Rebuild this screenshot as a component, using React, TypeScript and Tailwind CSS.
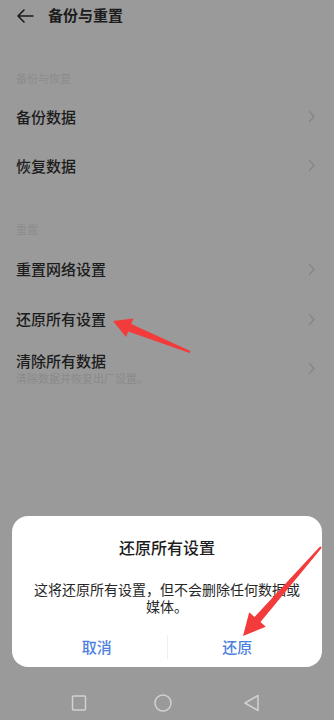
const FONT = "font-['Noto_Sans_CJK_SC','Noto_Sans',sans-serif]"

function Chevron() {
  return (
    <svg width="8" height="13" viewBox="0 0 8 13" fill="none">
      <path d="M1.5 1.5 L6 6.5 L1.5 11.5" stroke="#858585" strokeWidth="1.3" strokeLinecap="round" strokeLinejoin="round" />
    </svg>
  )
}

function Row({ title, subtitle, tall }: { title: string; subtitle?: string; tall?: boolean }) {
  return (
    <div className={`flex items-center justify-between pl-4 pr-[18px] ${tall ? 'h-[50px]' : 'h-[49px]'}`}>
      <div className="flex flex-col">
        <span className="text-[15px] font-medium leading-[20px] text-[#1c1c1c]">{title}</span>
        {subtitle && <span className="text-[11px] leading-[15px] text-[#8a8a8a]">{subtitle}</span>}
      </div>
      <Chevron />
    </div>
  )
}

function SectionLabel({ text }: { text: string }) {
  return <div className="h-4 pl-4 text-[11px] leading-4 text-[#8c8c8c]">{text}</div>
}

export default function App() {
  return (
    <div className={`relative flex h-[720px] w-[334px] flex-col overflow-hidden bg-[#9a9a9a] ${FONT}`}>
      <div className="flex h-[31px] items-center gap-[14px] pl-[16px]">
        <svg width="18" height="16" viewBox="0 0 18 16" fill="none">
          <path d="M17 8 H2 M8 2 L2 8 L8 14" stroke="#1c1c1c" strokeWidth="1.6" strokeLinecap="round" strokeLinejoin="round" />
        </svg>
        <span className="text-[15px] font-semibold text-[#1c1c1c]">备份与重置</span>
      </div>

      <div className="mt-[39px]">
        <SectionLabel text="备份与恢复" />
      </div>
      <div className="mt-[6px]">
        <Row title="备份数据" />
        <Row title="恢复数据" />
      </div>

      <div className="mt-[31px]">
        <SectionLabel text="重置" />
      </div>
      <div className="mt-[7px]">
        <Row title="重置网络设置" tall />
        <Row title="还原所有设置" tall />
        <Row title="清除所有数据" subtitle="清除数据并恢复出厂设置。" />
      </div>

      <div className="mt-auto flex h-[34px] items-center justify-center gap-[66px]">
        <svg width="18" height="18" viewBox="0 0 18 18" fill="none">
          <rect x="2.5" y="2" width="13" height="14" rx="1" stroke="#d2d2d2" strokeWidth="1.5" />
        </svg>
        <svg width="18" height="18" viewBox="0 0 18 18" fill="none">
          <circle cx="9" cy="9" r="8" stroke="#d2d2d2" strokeWidth="1.5" />
        </svg>
        <svg width="22" height="18" viewBox="0 0 22 18" fill="none" className="ml-[4px]">
          <path d="M16 1.5 V16.5 L3 9 Z" stroke="#d2d2d2" strokeWidth="1.5" strokeLinejoin="round" />
        </svg>
      </div>

      <div className="absolute left-[12px] top-[516px] flex h-[151px] w-[310px] flex-col rounded-[16px] bg-white">
        <div className="pt-[19px] text-center text-[16px] font-medium leading-[24px] text-[#1c1c1c]">还原所有设置</div>
        <div className="mt-[22px] px-[20px] text-center text-[14px] leading-[17px] text-[#262626]">
          这将还原所有设置，但不会删除任何数据或媒体。
        </div>
        <div className="mt-auto flex h-[40px] items-center px-[15px]">
          <div className="flex flex-1 justify-center text-[15px] font-medium text-[#4d7fe0]">取消</div>
          <div className="h-[24px] w-px bg-[#efefef]" />
          <div className="flex flex-1 justify-center text-[15px] font-medium text-[#4d7fe0]">还原</div>
        </div>
      </div>

      <svg className="pointer-events-none absolute inset-0" width="334" height="720" viewBox="0 0 334 720">
        <polygon
          points="113,321 133.4,318.4 131.2,324 190.4,351.1 189.6,352.9 128.2,331.4 126,337"
          fill="#f23b3b"
        />
        <polygon
          points="243,636 265.8,626.7 260.5,622.1 321.75,547.66 320.25,546.34 254.5,616.9 249.2,612.3"
          fill="#f23b3b"
        />
      </svg>
    </div>
  )
}
